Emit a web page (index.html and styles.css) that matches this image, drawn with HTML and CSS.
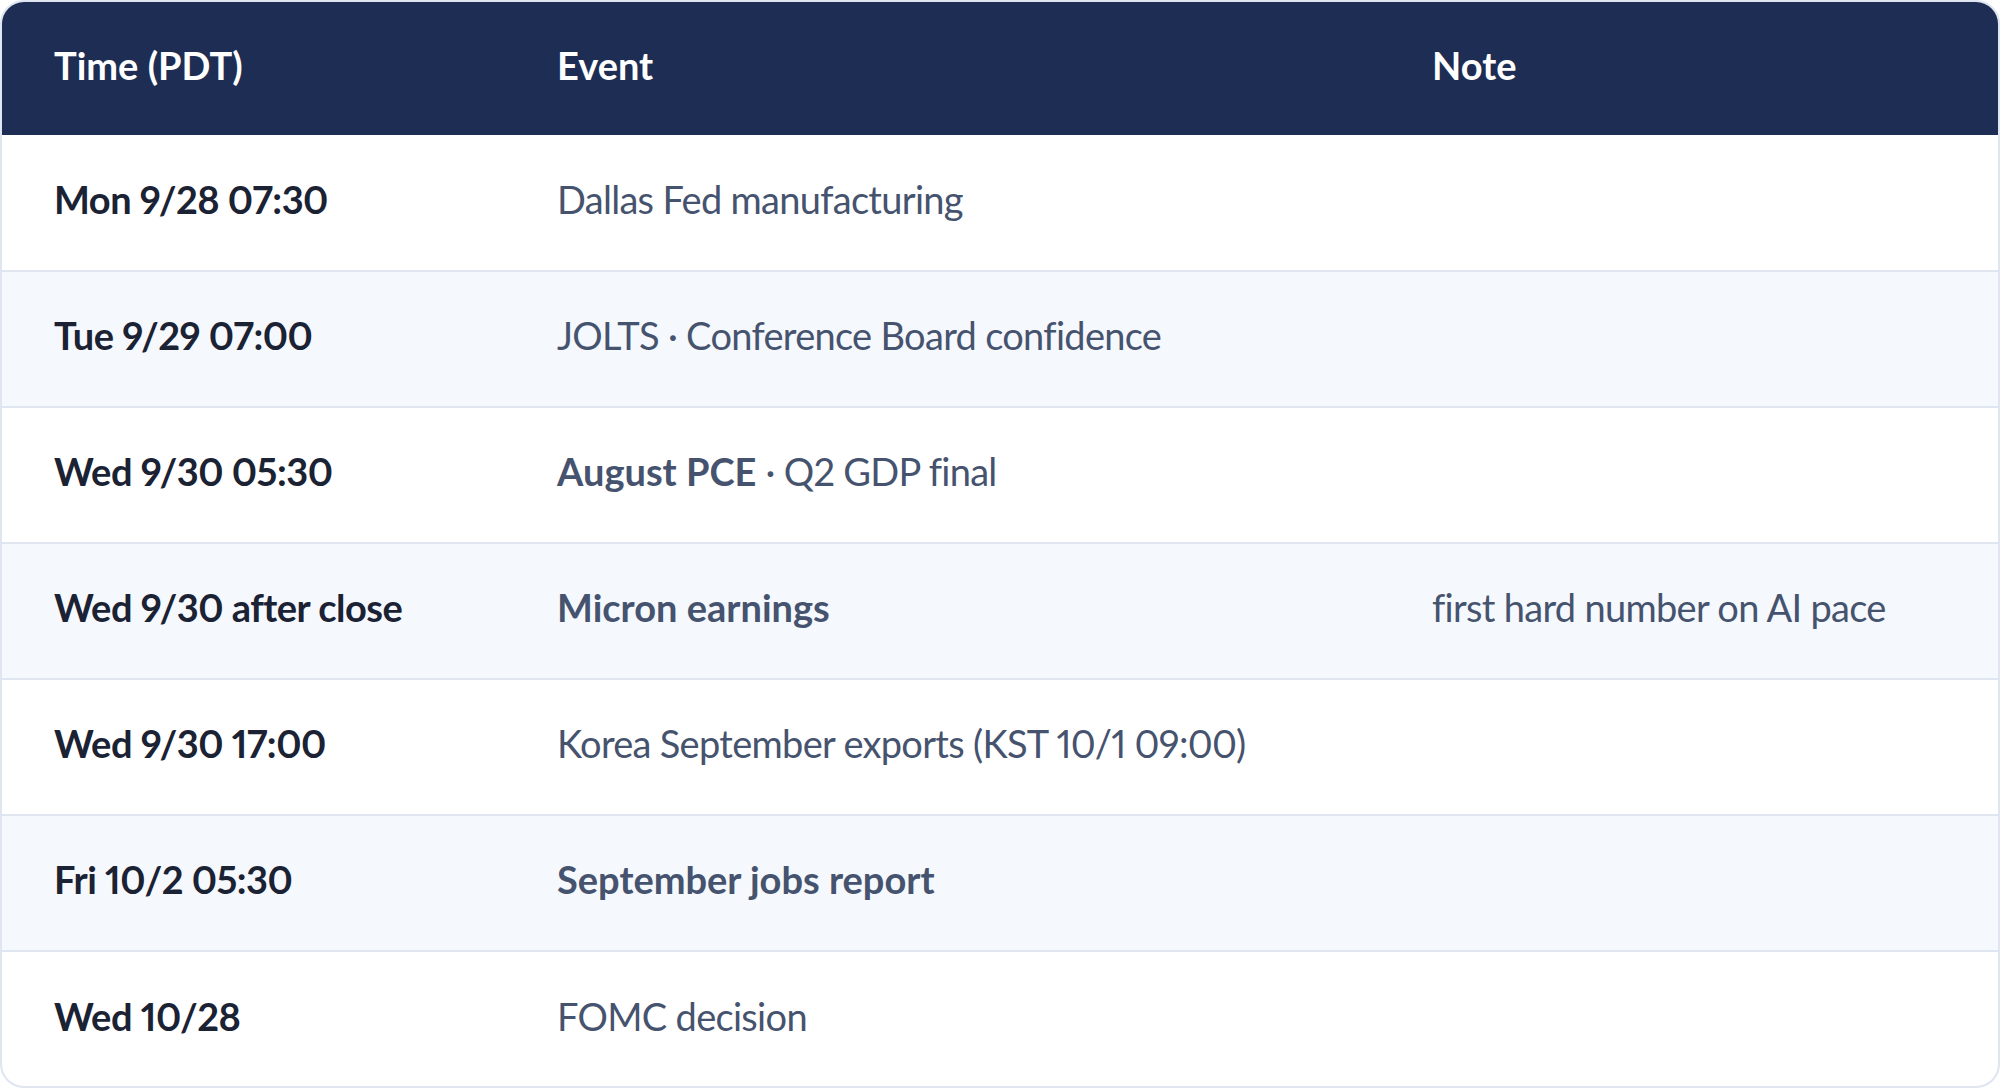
FILE: index.html
```html
<!DOCTYPE html>
<html lang="en">
<head>
<meta charset="utf-8">
<title>Schedule</title>
<link rel="stylesheet" href="styles.css">
</head>
<body>
<div class="card">
  <table class="sched">
    <colgroup>
      <col class="c-time">
      <col class="c-event">
      <col class="c-note">
    </colgroup>
    <thead>
      <tr><th>Time (PDT)</th><th>Event</th><th>Note</th></tr>
    </thead>
    <tbody>
      <tr><td class="t">Mon 9/28 07:30</td><td class="e">Dallas Fed manufacturing</td><td class="n"></td></tr>
      <tr class="alt"><td class="t">Tue 9/29 07:00</td><td class="e">JOLTS · Conference Board confidence</td><td class="n"></td></tr>
      <tr><td class="t">Wed 9/30 05:30</td><td class="e"><strong>August PCE</strong> · Q2 GDP final</td><td class="n"></td></tr>
      <tr class="alt"><td class="t">Wed 9/30 after close</td><td class="e"><strong>Micron earnings</strong></td><td class="n">first hard number on AI pace</td></tr>
      <tr><td class="t">Wed 9/30 17:00</td><td class="e">Korea September exports (KST 10/1 09:00)</td><td class="n"></td></tr>
      <tr class="alt"><td class="t">Fri 10/2 05:30</td><td class="e"><strong>September jobs report</strong></td><td class="n"></td></tr>
      <tr><td class="t">Wed 10/28</td><td class="e">FOMC decision</td><td class="n"></td></tr>
    </tbody>
  </table>
</div>
</body>
</html>
```

FILE: styles.css
```css
html, body {
  margin: 0;
  padding: 0;
  background: #ffffff;
}

.card {
  width: 2000px;
  height: 1088px;
  box-sizing: border-box;
  border: 2px solid #dfe5f1;
  border-radius: 24px;
  overflow: hidden;
  background: #ffffff;
  font-family: Lato, "Noto Sans", sans-serif;
  font-variant-ligatures: none;
  font-variant-numeric: proportional-nums;
}

.sched {
  width: 100%;
  border-collapse: collapse;
  table-layout: fixed;
}

.c-time { width: 503px; }
.c-event { width: 875px; }

.sched th {
  background: #1e2d53;
  color: #ffffff;
  font-size: 38px;
  font-weight: 700;
  text-align: left;
  height: 133px;
  padding: 0 0 8px 52px;
  box-sizing: border-box;
  vertical-align: middle;
  line-height: 1;
}

.sched td {
  height: 136px;
  padding: 0 0 8px 52px;
  vertical-align: middle;
  font-size: 38px;
  line-height: 1;
  box-sizing: border-box;
}

.sched tbody tr {
  border-bottom: 2px solid #dfe5f1;
}

.sched tbody tr:last-child {
  border-bottom: none;
}

.sched tr.alt td {
  background: #f5f8fd;
}

.sched td.t {
  font-weight: 700;
  color: #1a2233;
  letter-spacing: -0.5px;
}

.sched td.e,
.sched td.n {
  font-weight: 400;
  color: #46536e;
  letter-spacing: -0.7px;
}

.sched td.e strong {
  font-weight: 700;
  letter-spacing: 0;
}
```
